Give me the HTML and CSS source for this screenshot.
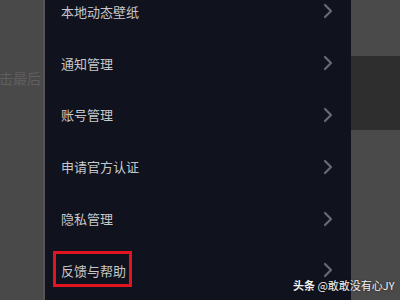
FILE: index.html
```html
<!DOCTYPE html>
<html lang="zh">
<head>
<meta charset="utf-8">
<link rel="stylesheet" href="styles.css">
</head>
<body>
<div class="screen">
  <div class="side-left"><span class="ghost">击最后</span></div>
  <div class="menu">
    <div class="row"><span class="label">本地动态壁纸</span><svg class="chev" viewBox="0 0 10 16"><polyline points="2,2 8,8 2,14"/></svg></div>
    <div class="row"><span class="label">通知管理</span><svg class="chev" viewBox="0 0 10 16"><polyline points="2,2 8,8 2,14"/></svg></div>
    <div class="row"><span class="label">账号管理</span><svg class="chev" viewBox="0 0 10 16"><polyline points="2,2 8,8 2,14"/></svg></div>
    <div class="row"><span class="label">申请官方认证</span><svg class="chev" viewBox="0 0 10 16"><polyline points="2,2 8,8 2,14"/></svg></div>
    <div class="row"><span class="label">隐私管理</span><svg class="chev" viewBox="0 0 10 16"><polyline points="2,2 8,8 2,14"/></svg></div>
    <div class="row"><span class="label marked">反馈与帮助</span><svg class="chev" viewBox="0 0 10 16"><polyline points="2,2 8,8 2,14"/></svg></div>
  </div>
  <div class="side-right">
    <div class="block-top"></div>
    <div class="block-band"></div>
    <div class="block-rest"></div>
  </div>
  <div class="watermark"><b>头条</b> @敢敢没有心JY</div>
</div>
</body>
</html>
```
FILE: styles.css
```css
* { box-sizing: border-box; }
html, body { margin: 0; padding: 0; }
body {
  width: 400px;
  height: 300px;
  overflow: hidden;
  font-family: "Noto Sans CJK SC", "Noto Sans", sans-serif;
  background: #4a4a4a;
}
.screen {
  position: relative;
  display: flex;
  width: 400px;
  height: 300px;
}
.side-left {
  width: 45px;
  background: #494949;
  border-right: 2px solid #555555;
  display: flex;
  flex-direction: column;
  padding-top: 68px;
  overflow: hidden;
}
.ghost {
  font-size: 14px;
  line-height: 20px;
  color: #5f5f5f;
  white-space: nowrap;
  margin-left: -1px;
}
.menu {
  width: 306px;
  background: #10131d;
  padding: 0 18px 0 16px;
  display: flex;
  flex-direction: column;
  overflow: hidden;
}
.row {
  flex: 0 0 51.8px;
  display: flex;
  align-items: center;
  justify-content: space-between;
}
.row:first-child { margin-top: -14px; }
.label {
  font-size: 13px;
  line-height: 18px;
  color: #c6c7cc;
  letter-spacing: 0;
}
.marked { position: relative; }
.marked::after {
  content: "";
  position: absolute;
  left: -8px;
  right: -6px;
  top: -11px;
  bottom: -7px;
  border: 3px solid #e3141f;
}
.chev {
  width: 10px;
  height: 16px;
  margin-top: -1px;
}
.chev polyline {
  fill: none;
  stroke: #686a73;
  stroke-width: 2.2;
  stroke-linecap: round;
  stroke-linejoin: round;
}
.side-right {
  width: 49px;
  display: flex;
  flex-direction: column;
}
.block-top { height: 56px; background: #4a4a4a; }
.block-band { height: 74px; background: #2e2e2e; }
.block-rest { flex: 1; background: #4a4a4a; }
.watermark {
  position: absolute;
  left: 293px;
  top: 277px;
  font-size: 11px;
  line-height: 16px;
  color: #f2f2f2;
  white-space: nowrap;
  text-shadow: 0 0 2px rgba(0,0,0,0.6);
}
.watermark b { font-weight: 700; }
```
